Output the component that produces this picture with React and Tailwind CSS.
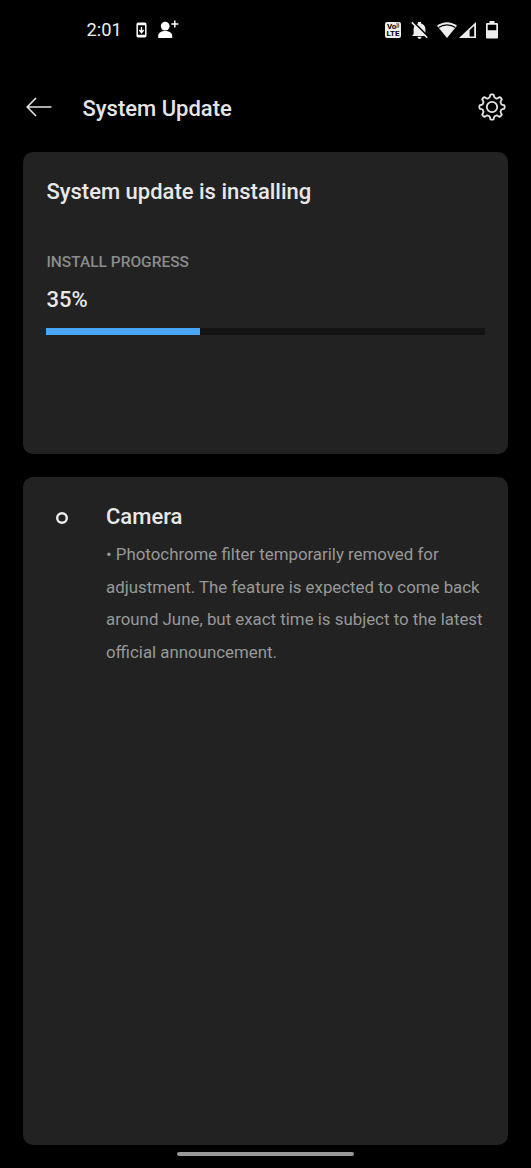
import React from 'react';

const INSTALL_PROGRESS = 35;

const notes = [
  '• Photochrome filter temporarily removed for',
  'adjustment. The feature is expected to come back',
  'around June, but exact time is subject to the latest',
  'official announcement.',
];

// Eight-toothed outline on a 30x30 canvas
const gearPath = (() => {
  const at = (r, deg) => {
    const a = (deg * Math.PI) / 180;
    return `${(15 + r * Math.cos(a)).toFixed(2)} ${(15 + r * Math.sin(a)).toFixed(2)}`;
  };
  let d = `M${at(12.5, -7)}`;
  for (let i = 0; i < 8; i++) {
    const t = i * 45;
    d += `Q${at(13, t)} ${at(12.5, t + 7)}`;
    d += `L${at(10.8, t + 11)}`;
    d += `Q${at(9.2, t + 14)} ${at(9.7, t + 22.5)}`;
    d += `Q${at(9.2, t + 31)} ${at(10.8, t + 34)}`;
    d += `L${at(12.5, t + 38)}`;
  }
  return d + 'Z';
})();

const StatusBar = () => (
  <div className="flex h-[60px] items-center justify-between pl-[86.5px] pr-[33px] text-white">
    <div className="flex items-center">
      <span className="w-[49.5px] text-[18.3px] leading-6 text-[#eeeeee]">2:01</span>
      <svg className="h-5 w-[11px]" viewBox="0 0 11 20" fill="none">
        <rect x="1.2" y="3.2" width="8.6" height="13.6" rx="1" stroke="currentColor" strokeWidth="1.5" />
        <path d="M1 4.2h9M1 15.8h9" stroke="currentColor" strokeWidth="2" />
        <path d="M5.5 7v5M3.3 10l2.2 2.6L7.7 10" stroke="currentColor" strokeWidth="1.4" />
      </svg>
      <svg className="ml-[11px] h-6 w-[22px]" viewBox="0 0 22 24" fill="currentColor">
        <circle cx="7.2" cy="8.1" r="4.4" />
        <path d="M.2 20v-2.2c0-3.2 3.2-4.9 7-4.9s7 1.7 7 4.9V20z" />
        <path d="M16.8 2.5v7M13.3 6h7" stroke="currentColor" strokeWidth="1.5" />
      </svg>
    </div>

    <div className="flex items-center">
      <div className="flex h-4 w-4 flex-col items-center justify-center rounded-[2px] bg-[#eeeeee] text-[8px] font-bold leading-[7px] text-black">
        <span className="flex whitespace-nowrap tracking-[-0.3px]">
          Vo<span className="text-[5px] leading-[5px]">))</span>
        </span>
        <span>LTE</span>
      </div>
      <svg className="ml-[10px] h-[18px] w-[17px]" viewBox="0 0 17 18">
        <path d="M2.6 13V8c0-2.9 1.7-4.9 4.4-5.5V1h3v1.5c2.7.6 4.4 2.6 4.4 5.5v5l1.6 2H1zM6.4 15.8h4.2a2.1 2.1 0 0 1-4.2 0z" fill="#eeeeee" />
        <path d="M2.2.6l15.4 15.4" stroke="#000" strokeWidth="1.6" />
        <path d="M.8 1.4l15.4 15.4" stroke="#eeeeee" strokeWidth="1.5" />
      </svg>
      <svg className="ml-[9px] h-4 w-5" viewBox="0 0 20 16">
        <path d="M0 3.8C5.8-.9 14.2-.9 20 3.8L10 16z" fill="#eeeeee" />
        <path d="M1.6 5.5c4.8-3.6 12-3.6 16.8 0" fill="none" stroke="#000" strokeWidth="1.2" />
      </svg>
      <svg className="ml-[2px] h-4 w-[17px]" viewBox="0 0 17 16">
        <path d="M17 0v16H0z" fill="#eeeeee" />
        <path d="M10.6 8.2l4.6-4.4v10.6h-4.6z" fill="#000" />
      </svg>
      <svg className="ml-[10px] h-[18px] w-3" viewBox="0 0 12 18" fill="#eeeeee">
        <path fillRule="evenodd" d="M3.5 0h5v2H11a1 1 0 0 1 1 1v13.5a1 1 0 0 1-1 1H1a1 1 0 0 1-1-1V3a1 1 0 0 1 1-1h2.5zM1.7 3.7v5.5h8.6V3.7z" />
      </svg>
    </div>
  </div>
);

const Header = () => (
  <header className="flex h-[92px] items-center pl-[26px] pr-6 pt-[2px] text-[#e5e5e5]">
    <svg className="h-5 w-[26px]" viewBox="0 0 26 20" fill="none" stroke="currentColor" strokeWidth="1.6">
      <path d="M25.5 10H1.5M10 1L1.2 10l8.8 9" />
    </svg>
    <h1 className="ml-[30.5px] pt-[3px] text-[22px] font-medium leading-7">System Update</h1>
    <svg className="ml-auto h-[30px] w-[30px]" viewBox="0 0 30 30" fill="none" stroke="currentColor" strokeWidth="1.8" strokeLinejoin="round">
      <path d={gearPath} />
      <circle cx="15" cy="15" r="5.2" />
    </svg>
  </header>
);

const ProgressCard = () => (
  <section className="h-[302px] rounded-[10px] bg-[#222222] px-[23.4px] pt-[25px] text-[#e8e8e8]">
    <h2 className="text-[22px] font-medium leading-[30px]">System update is installing</h2>
    <p className="mt-[45px] text-[15.5px] font-medium leading-5 text-[#8c8c8c]">INSTALL PROGRESS</p>
    <p className="mt-[14px] text-[22px] font-medium leading-7">{INSTALL_PROGRESS}%</p>
    <div className="mt-[14px] h-[7px] bg-[#131313]">
      <div className="h-full bg-[#49a6f7]" style={{ width: `${INSTALL_PROGRESS}%` }} />
    </div>
  </section>
);

const ChangelogCard = () => (
  <section className="mt-[23px] flex h-[668px] rounded-[10px] bg-[#222222] pt-[25px]">
    <div className="w-[83px] shrink-0 pl-[33px] pt-[10px]">
      <svg className="h-3 w-3" viewBox="0 0 12 12" fill="none">
        <circle cx="6" cy="6" r="4.8" stroke="#eeeeee" strokeWidth="2.4" />
      </svg>
    </div>
    <div>
      <h2 className="text-[22px] font-medium leading-[30px] text-[#e8e8e8]">Camera</h2>
      <div className="mt-[6.4px] text-[16.85px] leading-[32.4px] text-[#989898]">
        {notes.map((line) => (
          <p key={line} className="whitespace-nowrap">{line}</p>
        ))}
      </div>
    </div>
  </section>
);

const App = () => {
  return (
    <div className="h-[1168px] w-[531px] overflow-hidden bg-black font-['Roboto',sans-serif]">
      <StatusBar />
      <Header />
      <main className="px-[23px]">
        <ProgressCard />
        <ChangelogCard />
      </main>
      {/* Gesture bar */}
      <div className="mx-auto mt-[7px] h-[4px] w-[177px] rounded-full bg-[#999999]" />
    </div>
  );
};

export default App;
